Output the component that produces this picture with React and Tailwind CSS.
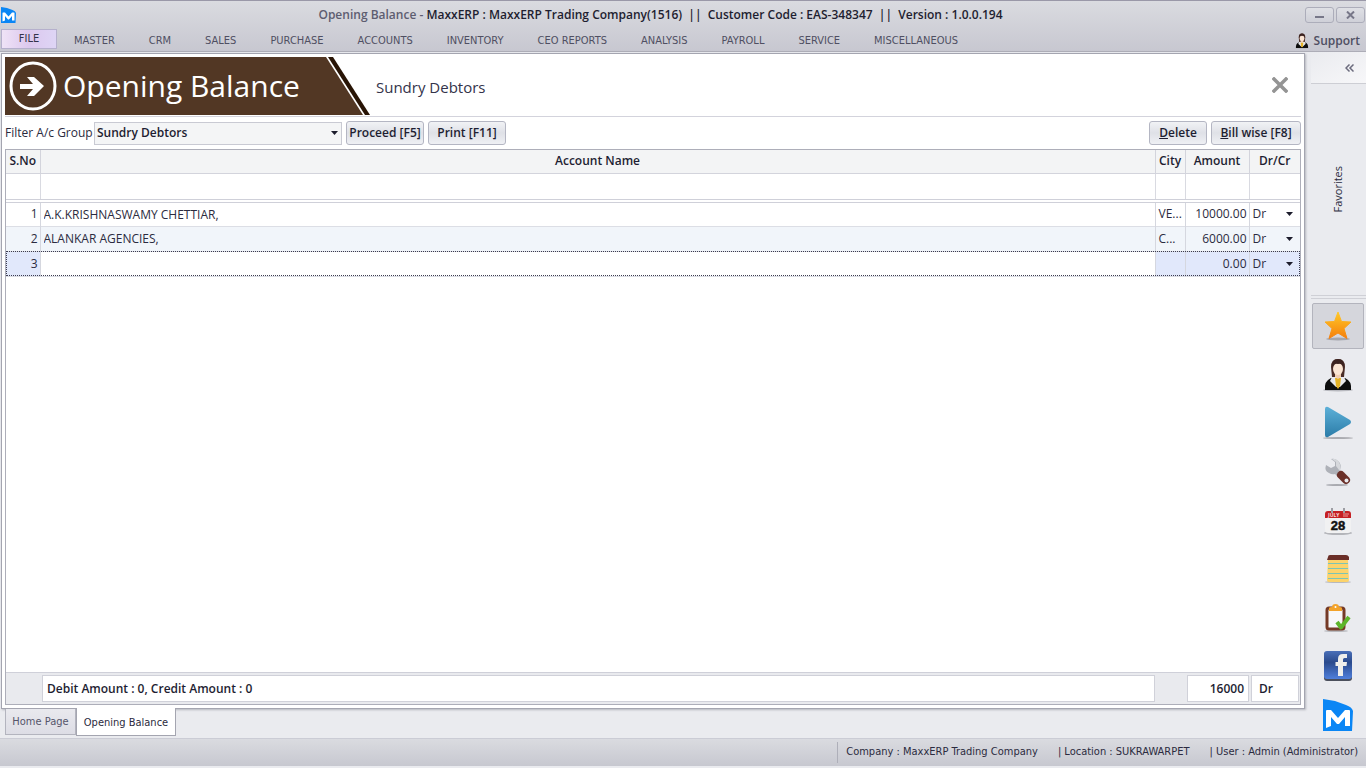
import { useState } from 'react';

const menus = [
  'MASTER',
  'CRM',
  'SALES',
  'PURCHASE',
  'ACCOUNTS',
  'INVENTORY',
  'CEO REPORTS',
  'ANALYSIS',
  'PAYROLL',
  'SERVICE',
  'MISCELLANEOUS',
];

const initialRows = [
  { name: 'A.K.KRISHNASWAMY CHETTIAR,', city: 'VE...', amount: '10000.00', type: 'Dr' },
  { name: 'ALANKAR AGENCIES,', city: 'C...', amount: '6000.00', type: 'Dr' },
  { name: '', city: '', amount: '0.00', type: 'Dr' },
];

function Logo({ className }) {
  return (
    <svg viewBox="0 0 30 32" className={className} aria-hidden="true">
      <path d="M0 0 L12 2 L23 6 Q29 8 30 12 L29 32 L0 32 Z" fill="#0a86f5" />
      <path d="M3 29 L3 12 Q3 11 4 11 L8 11 L15 19 L22 11 L26 11 Q27 11 27 12 L27 27 L22 27 L22 18 L16 25 L14 25 L8 18 L8 27 Z" fill="#fff" />
    </svg>
  );
}

function Person({ className }) {
  return (
    <svg viewBox="0 0 30 34" className={className} aria-hidden="true">
      <ellipse cx="15" cy="32" rx="15" ry="1.5" fill="#b8b9bf" />
      <path d="M8 9 Q8 1 15 1 Q22 1 22 9 L21 19 L9 19 Z" fill="#4a2c26" />
      <path d="M2 32 Q1 23 8 20 L22 20 Q29 23 28 32 Z" fill="#0d0d0d" />
      <path d="M9 19 L21 19 L23 23 L17 29 L13 29 L7 23 Z" fill="#e9e9ec" />
      <path d="M12 20 L18 20 L17 28 L15 31 L13 28 Z" fill="#e5b326" />
      <path d="M12 14 H18 V19 L15 21 L12 19 Z" fill="#f0cdb2" />
      <ellipse cx="15" cy="11" rx="5" ry="6" fill="#fbe5d3" />
      <path d="M9 10 Q10 5 15 6 Q20 5 21 10 Q22 1 15 1 Q8 1 9 10" fill="#3c2320" />
    </svg>
  );
}

function Caret() {
  return (
    <svg viewBox="0 0 7 4" className="pointer-events-none absolute right-1 top-1/2 h-1 w-[7px] -translate-y-1/2" aria-hidden="true">
      <path d="M0 0 H7 L3.5 4 Z" fill="#1c1c2c" />
    </svg>
  );
}

function StarIcon() {
  return (
    <svg viewBox="0 0 30 32" className="h-8 w-[30px]" aria-hidden="true">
      <defs>
        <linearGradient id="star" x1="0" y1="0" x2="0" y2="1">
          <stop offset="0" stopColor="#ffc928" />
          <stop offset="1" stopColor="#f57f0c" />
        </linearGradient>
      </defs>
      <ellipse cx="15" cy="29" rx="12" ry="1.5" fill="#a5a6ad" />
      <path d="M15 2 L18.5 11.500 L28 12 L21 18.5 L24 28.5 L15 23 L6 28.5 L9 18.5 L2 12 L11.5 11.500 Z" fill="url(#star)" stroke="url(#star)" strokeLinejoin="round" />
    </svg>
  );
}

function PlayIcon() {
  return (
    <svg viewBox="0 0 30 34" className="h-[34px] w-[30px]" aria-hidden="true">
      <defs>
        <linearGradient id="play" x1="0" y1="0" x2="0" y2="1">
          <stop offset="0" stopColor="#5db0d8" />
          <stop offset="1" stopColor="#2b7ca8" />
        </linearGradient>
      </defs>
      <ellipse cx="15" cy="32" rx="15" ry="1" fill="#aaabb0" />
      <path d="M2 3 Q2 0 5 1 L27 14 Q29 16 27 18 L5 31 Q2 32 2 29 Z" fill="url(#play)" />
    </svg>
  );
}

function WrenchIcon() {
  return (
    <svg viewBox="0 0 30 30" className="h-[30px] w-[30px]" aria-hidden="true">
      <ellipse cx="14" cy="28" rx="11" ry="1" fill="#a9aab0" />
      <path d="M8 2 L12 5 L12 9 L8 11 L3 8 Q1 14 6 16 Q9 18 12 17 L16 21 L20 17 L17 13 Q19 7 15 4 Q12 1 8 2 Z" fill="#aeb1b8" />
      <path d="M9 2 L13 5 L13 9 L16 13 L19 16 L17 12 Q18 7 15 4 Q12 1 9 2" fill="#d6d8dc" />
      <path d="M18 18 L23 23" stroke="#6b3029" strokeWidth="8" strokeLinecap="round" />
      <circle cx="23.500" cy="23.500" r="2" fill="#eaebef" />
    </svg>
  );
}

function CalendarIcon() {
  return (
    <svg viewBox="0 0 30 28" className="h-7 w-[30px]" aria-hidden="true">
      <ellipse cx="15" cy="26" rx="14" ry="2" fill="#b4b5ba" />
      <rect x="2" y="4" width="26" height="22" rx="3" fill="#f1f1f2" />
      <path d="M2 11 V7 Q2 4 5 4 H25 Q28 4 28 7 V11 Z" fill="#c41f24" />
      <path d="M9 1 V6 M21 1 V6" stroke="#9d9da3" strokeWidth="2" />
      <text x="5" y="10" fontSize="5" fontWeight="700" fill="#f6d9d9" fontFamily="Open Sans, sans-serif">JULY</text>
      <path d="M20 7 H26 M20 9 H25" stroke="#ea9a9b" />
      <text x="15" y="23" fontSize="13" fontWeight="700" textAnchor="middle" fill="#111" stroke="#111" strokeWidth="0.5" fontFamily="Liberation Sans, sans-serif">28</text>
    </svg>
  );
}

function NotesIcon() {
  return (
    <svg viewBox="0 0 30 30" className="h-[30px] w-[30px]" aria-hidden="true">
      <ellipse cx="15" cy="28" rx="13" ry="1" fill="#b7b8bd" />
      <path d="M5 6 H25 L26 26 Q26 28 24 28 H6 Q4 28 4 26 Z" fill="#fcd36b" />
      <path d="M5 3 Q5 1 7 1 H23 Q25 1 26 3 V6 H4 Z" fill="#6a2e27" />
      <path d="M5 9.500 H25 M5 14.500 H25 M5 19.500 H25 M5 24.500 H25" stroke="#7cc4b4" />
    </svg>
  );
}

function ClipboardIcon() {
  return (
    <svg viewBox="0 0 30 30" className="h-[30px] w-[30px]" aria-hidden="true">
      <ellipse cx="13" cy="28" rx="12" ry="1" fill="#b7b8bd" />
      <rect x="4" y="5" width="17" height="21" rx="2" fill="#f7f7f8" stroke="#743a27" strokeWidth="3" />
      <path d="M6 8 V5 Q6 4 9 4 Q9 1 12.500 1 Q16 1 16 4 Q19 4 19 5 V8 Z" fill="#f3a32a" />
      <circle cx="12.500" cy="4" r="1" fill="#fff" />
      <path d="M14 19 L18 24.500 L26 14" fill="none" stroke="#5db52a" strokeWidth="4" strokeLinejoin="round" />
    </svg>
  );
}

function FacebookIcon() {
  return (
    <svg viewBox="0 0 30 32" className="h-8 w-[30px]" aria-hidden="true">
      <defs>
        <linearGradient id="fb" x1="0" y1="0" x2="0" y2="1">
          <stop offset="0" stopColor="#4a6fb8" />
          <stop offset="0.4" stopColor="#2b4a8c" />
          <stop offset="1" stopColor="#4f7fdc" />
        </linearGradient>
      </defs>
      <rect x="1" y="2" width="28" height="29" rx="3" fill="#4b4f5c" />
      <rect x="1" y="1" width="28" height="28" rx="3" fill="url(#fb)" />
      <path d="M15 26 V16 H12.500 V12 H15 V9 Q15 4 20 4 H24 V8 H21.500 Q20 8 20 9.500 V12 H24 L23.500 16 H20 V26 Z" fill="#f0efec" />
    </svg>
  );
}

const shortcuts = [
  { label: 'Favorites', icon: <StarIcon />, active: true },
  { label: 'Contacts', icon: <Person className="h-[34px] w-[30px]" /> },
  { label: 'Run', icon: <PlayIcon /> },
  { label: 'Tools', icon: <WrenchIcon /> },
  { label: 'Calendar', icon: <CalendarIcon /> },
  { label: 'Notes', icon: <NotesIcon /> },
  { label: 'Tasks', icon: <ClipboardIcon /> },
  { label: 'Facebook', icon: <FacebookIcon /> },
  { label: 'MaxxERP', icon: <Logo className="h-8 w-[30px]" /> },
];

function ToolButton({ className = '', children }) {
  return (
    <button
      className={`h-6 rounded-[3px] border border-[#b4b6c3] bg-linear-to-b from-[#f1f2f5] via-[#dfe1e7] to-[#eff0f4] text-center text-[12px] font-semibold text-[#1e1e32] ${className}`}
    >
      {children}
    </button>
  );
}

function TitleBar() {
  return (
    <header className="border-t border-[#9a98a8] bg-linear-to-b from-[#dadbe0] to-[#c7c7d0]">
      <div className="flex h-[29px] items-center px-px pb-[2px]">
        <Logo className="h-4 w-[15px]" />
        <h1 className="flex-1 whitespace-pre text-center text-[12px] font-semibold text-[#1e1e30]">
          <span className="text-[#5d5d70]">Opening Balance - </span>
          {'MaxxERP : MaxxERP Trading Company(1516)  ||  Customer Code : EAS-348347  ||  Version : 1.0.0.194'}
        </h1>
        <div className="flex gap-[2px]">
          <button aria-label="Minimize" className="flex h-4 w-[29px] items-center justify-center rounded-[3px] border border-[#acadba] bg-linear-to-b from-[#dfe0e5] to-[#cfd0d8]">
            <span className="mt-1 h-[2px] w-[9px] bg-[#777788]" />
          </button>
          <button aria-label="Close window" className="flex h-4 w-[29px] items-center justify-center rounded-[3px] border border-[#acadba] bg-linear-to-b from-[#dfe0e5] to-[#cfd0d8]">
            <svg viewBox="0 0 9 8" className="h-2 w-[9px]" aria-hidden="true">
              <path d="M1 0.500 L8 7.500 M8 0.500 L1 7.500" stroke="#777788" strokeWidth="2" />
            </svg>
          </button>
        </div>
      </div>
      <nav className="flex h-[22px] items-center border-b border-[#adadb7] pr-[6px] font-['DejaVu_Sans_Condensed','DejaVu_Sans',sans-serif] text-[11px] text-[#4f4f62]">
        <button className="mb-[3px] ml-px h-5 w-14 border border-[#b5b0cc] bg-linear-to-r from-[#efe3f6] via-[#dcc8ee] to-[#ded5f5] text-[#33334a]">FILE</button>
        {menus.map((m) => (
          <button key={m} className="whitespace-nowrap px-[17px] pt-[2px]">{m}</button>
        ))}
        <a href="#support" className="ml-auto flex items-center gap-[5px] font-['Open_Sans',sans-serif] text-[12px] font-semibold">
          <Person className="h-4 w-[14px]" />
          Support
        </a>
      </nav>
    </header>
  );
}

function PageBanner({ onClose }) {
  return (
    <div className="flex h-[60px] items-start border-b border-[#d3d3dc]">
      <div className="flex h-[58px] items-center bg-[#523724] pl-1">
        <svg viewBox="0 0 48 50" className="h-[50px] w-12" aria-hidden="true">
          <ellipse cx="24" cy="25" rx="22" ry="23" fill="none" stroke="#fff" strokeWidth="3" />
          <path d="M11 23 H24 L18 16 H25 L35 25 L25 35 H18 L24 28 H11 Z" fill="#fff" />
        </svg>
        <h2 className="w-[266px] whitespace-nowrap pl-[6px] font-['Open_Sans',sans-serif] text-[30px] leading-[56px] text-white">Opening Balance</h2>
      </div>
      <svg viewBox="0 0 50 58" className="-ml-[2px] h-[58px] w-[50px]" aria-hidden="true">
        <path d="M0 0 L5 0 L42 58 L0 58 Z" fill="#523724" />
        <path d="M7 0 L12 0 L49 58 L44 58 Z" fill="#281405" />
      </svg>
      <h3 className="pl-[5px] pt-5 text-[15px] leading-5 text-[#33334a]">Sundry Debtors</h3>
      <button aria-label="Close" onClick={onClose} className="ml-auto mr-[13px] mt-5">
        <svg viewBox="0 0 16 16" className="h-4 w-4" aria-hidden="true">
          <path d="M2 2 L14 14 M14 2 L2 14" stroke="#949494" strokeWidth="3.5" strokeLinecap="square" />
        </svg>
      </button>
    </div>
  );
}

export default function App() {
  const [group, setGroup] = useState('Sundry Debtors');
  const [rows, setRows] = useState(initialRows);

  const updateRow = (index, field, value) => {
    setRows(rows.map((r, i) => (i === index ? { ...r, [field]: value } : r)));
  };

  return (
    <div className="flex min-h-screen flex-col bg-[#eaebef] pb-[2px] font-['Open_Sans',sans-serif] text-[12px] text-[#2b2b40]">
      <TitleBar />

      <div className="flex flex-1">
        <div className="flex flex-1 flex-col">
          <main className="ml-px mt-px flex flex-1 flex-col border border-[#a4a5b0] bg-white p-[3px] shadow-[1px_1px_2px_#b5b6be]">
            <PageBanner />

            {/* filter bar */}
            <div className="flex h-8 items-center">
              <label htmlFor="group" className="w-[89px] whitespace-nowrap">Filter A/c Group</label>
              <div className="relative mr-1 w-[248px]">
                <select
                  id="group"
                  value={group}
                  onChange={(e) => setGroup(e.target.value)}
                  className="block h-[23px] w-full appearance-none border border-[#c9cad3] bg-[#f4f5f6] pl-[2px] font-semibold text-[#1e1e32]"
                >
                  <option>Sundry Debtors</option>
                  <option>Sundry Creditors</option>
                </select>
                <Caret />
              </div>
              <ToolButton className="mr-1 w-[78px]">Proceed [F5]</ToolButton>
              <ToolButton className="w-[78px]">Print [F11]</ToolButton>
              <ToolButton className="ml-auto mr-1 w-[58px]"><u>D</u>elete</ToolButton>
              <ToolButton className="w-[90px]"><u>B</u>ill wise [F8]</ToolButton>
            </div>

            {/* accounts grid */}
            <div className="flex flex-1 flex-col border border-[#adaeb9]">
              <table className="w-full table-fixed border-collapse">
                <colgroup>
                  <col className="w-[34px]" />
                  <col />
                  <col className="w-[30px]" />
                  <col className="w-16" />
                  <col className="w-[51px]" />
                </colgroup>
                <thead>
                  <tr className="h-[23px] border-b border-[#d3d4dc] bg-[#f3f4f5] text-[#1e1e32]">
                    <th className="border-r border-[#d3d4dc] font-semibold">S.No</th>
                    <th className="border-r border-[#d3d4dc] font-semibold">Account Name</th>
                    <th className="border-r border-[#d3d4dc] font-semibold">City</th>
                    <th className="border-r border-[#d3d4dc] font-semibold">Amount</th>
                    <th className="font-semibold">Dr/Cr</th>
                  </tr>
                </thead>
                <tbody>
                  <tr className="h-7 border-b-4 border-double border-[#cfd0d9]">
                    <td className="border-r border-[#d9dae1]" />
                    <td className="border-r border-[#d9dae1]" />
                    <td className="border-r border-[#d9dae1]" />
                    <td className="border-r border-[#d9dae1]" />
                    <td />
                  </tr>
                  {rows.map((r, i) => {
                    const focused = i === rows.length - 1;
                    return (
                      <tr
                        key={i}
                        className={`h-[25px] border-b border-[#dcdee5] ${
                          focused
                            ? 'bg-[#e1e8fb] outline outline-1 -outline-offset-1 outline-dotted outline-[#3c3c50]'
                            : i % 2 === 1 ? 'bg-[#f1f5fa]' : 'bg-white'
                        }`}
                      >
                        <td className="border-r border-[#d5d7df] pr-[2px] text-right">{i + 1}</td>
                        <td className={`border-r border-[#d5d7df] px-[3px] ${focused ? 'bg-white' : ''}`}>
                          <input
                            aria-label="Account name"
                            value={r.name}
                            onChange={(e) => updateRow(i, 'name', e.target.value)}
                            className="block h-5 w-full bg-transparent outline-none"
                          />
                        </td>
                        <td className="whitespace-nowrap border-r border-[#d5d7df] pl-[3px]">{r.city}</td>
                        <td className="border-r border-[#d5d7df] px-[2px] text-right">{r.amount}</td>
                        <td className="px-[3px]">
                          <div className="relative">
                            <select
                              aria-label="Dr/Cr"
                              value={r.type}
                              onChange={(e) => updateRow(i, 'type', e.target.value)}
                              className="block h-5 w-full appearance-none bg-transparent outline-none"
                            >
                              <option>Dr</option>
                              <option>Cr</option>
                            </select>
                            <Caret />
                          </div>
                        </td>
                      </tr>
                    );
                  })}
                </tbody>
              </table>

              {/* totals */}
              <div className="mt-auto flex h-8 items-center border-t border-[#cfd0d9] bg-[#e9eaee] pl-9 pr-[1px] font-semibold text-[#1e1e32]">
                <div className="flex h-[27px] flex-1 items-center border border-[#d0d1d9] bg-white pl-1">Debit Amount : 0, Credit Amount : 0</div>
                <div className="ml-8 mr-[2px] flex h-[27px] w-[62px] items-center justify-end border border-[#d0d1d9] bg-white pr-1">16000</div>
                <div className="flex h-[27px] w-12 items-center border border-[#d0d1d9] bg-white pl-[7px]">Dr</div>
              </div>
            </div>
          </main>

          {/* open pages */}
          <div className="flex h-[29px] items-start pl-[5px] font-['DejaVu_Sans_Condensed','DejaVu_Sans',sans-serif] text-[11px]">
            <button className="h-[26px] w-[71px] whitespace-nowrap border border-t-0 border-[#b3b4be] bg-linear-to-b from-[#e9e9ee] to-[#dddde5] pt-[2px] text-[#55556a]">Home Page</button>
            <button className="relative -mt-px h-[28px] w-[100px] whitespace-nowrap border border-t-0 border-[#a4a5b0] bg-white pt-1">Opening Balance</button>
          </div>
        </div>

        <aside className="ml-[6px] flex w-[55px] flex-col">
          <div className="flex h-8 items-center justify-end border-b border-[#cdced4] bg-linear-to-br from-[#eaebef] to-[#f7f7f9] pr-3">
            <button aria-label="Expand panel">
              <svg viewBox="0 0 9 8" className="h-2 w-[9px]" aria-hidden="true">
                <path d="M4.500 0.500 L1 4 L4.500 7.500 M8.500 0.500 L5 4 L8.500 7.500" fill="none" stroke="#6b6b7d" strokeWidth="1.5" />
              </svg>
            </button>
          </div>
          <div className="flex h-[215px] items-center justify-center border-b-4 border-double border-[#cfd0d6]">
            <span className="rotate-180 text-[11px] [writing-mode:vertical-rl]">Favorites</span>
          </div>
          <div className="mt-1 flex flex-1 flex-col items-center justify-between pr-[2px]">
            {shortcuts.map((s) => (
              <button
                key={s.label}
                aria-label={s.label}
                className={`flex h-[46px] w-[52px] items-center justify-center ${
                  s.active ? 'rounded-[2px] border border-[#b3b4bd] bg-[#d5d6dc]' : ''
                }`}
              >
                {s.icon}
              </button>
            ))}
          </div>
        </aside>
      </div>

      <footer className="flex h-7 items-center justify-end border-t border-[#cbccd5] bg-linear-to-b from-[#dadbe0] to-[#c7c8d0] pr-2 font-['DejaVu_Sans_Condensed','DejaVu_Sans',sans-serif] text-[11px]">
        <span className="border-l border-[#aeafb9] py-[2px] pl-2">Company : MaxxERP Trading Company</span>
        <span className="pl-5">| Location : SUKRAWARPET</span>
        <span className="pl-5">| User : Admin (Administrator)</span>
      </footer>
    </div>
  );
}
